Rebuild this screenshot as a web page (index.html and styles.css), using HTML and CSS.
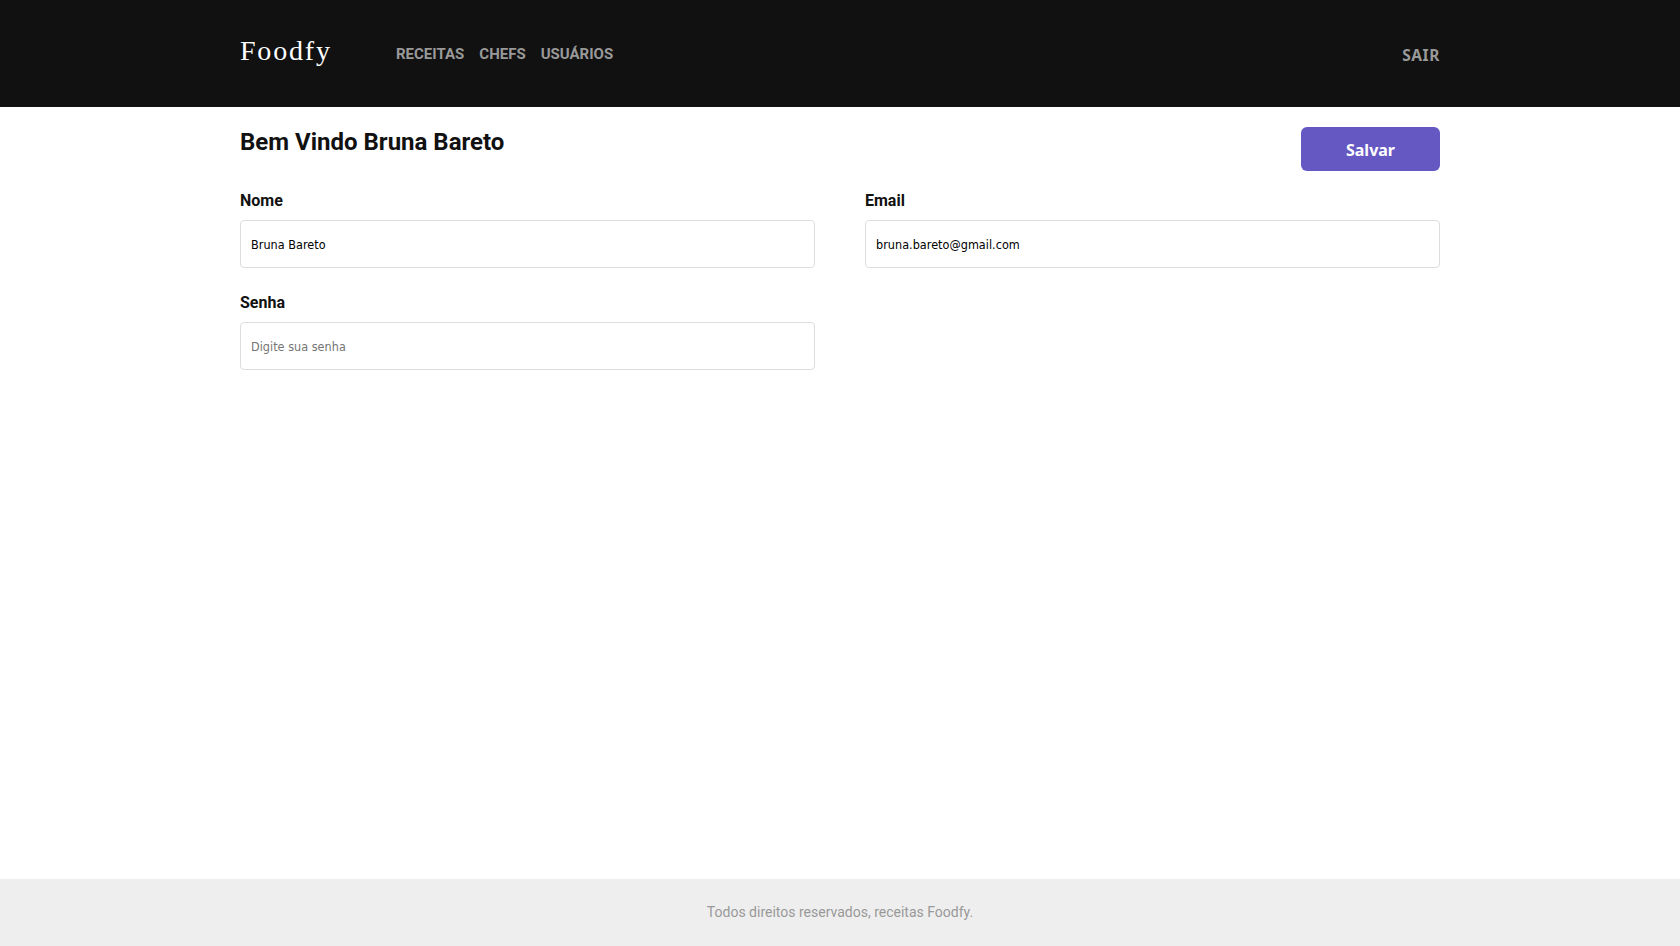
FILE: index.html
```html
<!DOCTYPE html>
<html lang="pt-br">
<head>
<meta charset="utf-8">
<title>Foodfy</title>
<link rel="stylesheet" href="styles.css">
</head>
<body>
<header class="header">
  <div class="container bar">
    <a class="logo">Foodfy</a>
    <nav class="nav"><a>RECEITAS</a><a>CHEFS</a><a>USUÁRIOS</a></nav>
    <button class="logout" type="button">SAIR</button>
  </div>
</header>
<main class="container main">
  <div class="title-row">
    <h1 class="title">Bem Vindo Bruna Bareto</h1>
    <button class="save" type="submit">Salvar</button>
  </div>
  <form class="form">
    <div class="field"><label class="label">Nome</label><input class="input" type="text" value="Bruna Bareto"></div>
    <div class="field"><label class="label">Email</label><input class="input" type="email" value="bruna.bareto@gmail.com"></div>
    <div class="field"><label class="label">Senha</label><input class="input" type="password" placeholder="Digite sua senha"></div>
  </form>
</main>
<footer class="footer">Todos direitos reservados, receitas Foodfy.</footer>
</body>
</html>
```
FILE: styles.css
```css
* { box-sizing: border-box; margin: 0; padding: 0; }
body { min-height: 100vh; display: flex; flex-direction: column; background: #fff; color: #111; font-family: Roboto, sans-serif; }
.container { width: 1200px; margin: 0 auto; }
.header { height: 107px; background: #111; }
.bar { height: 100%; display: flex; align-items: center; }
.logo { width: 156px; padding-bottom: 5px; color: #fff; font: 28px/32px "Liberation Serif", serif; letter-spacing: 1.8px; }
.nav { display: flex; gap: 15px; font-size: 15px; font-weight: 700; color: #999; }
.logout { margin-left: auto; padding-top: 2px; border: 0; background: none; color: #999; font: 700 15.5px "Noto Sans", sans-serif; letter-spacing: 0.6px; }
.main { flex: 1; padding-top: 20px; }
.title-row { display: flex; justify-content: space-between; align-items: flex-start; height: 44px; }
.title { font-size: 24px; line-height: 28px; font-weight: 700; margin-top: 1px; }
.save { width: 139px; height: 44px; padding-top: 1px; border: 0; border-radius: 6px; background: #6558c3; color: #fff; font: 700 16px "Noto Sans", sans-serif; }
.form { display: grid; grid-template-columns: 1fr 1fr; gap: 25px 50px; margin-top: 20px; }
.label { display: block; font-size: 16px; line-height: 19px; font-weight: 700; margin-bottom: 10px; }
.input { display: block; width: 100%; height: 48px; padding: 0 10px; border: 1px solid #ddd; border-radius: 4px; color: #000; font: condensed 12.5px "DejaVu Sans Condensed", "DejaVu Sans", sans-serif; letter-spacing: 0.03px; }
.input::placeholder { color: #757575; }
.footer { height: 67px; padding-bottom: 2px; display: flex; align-items: center; justify-content: center; background: #eee; color: #999; font-size: 14px; }
```
